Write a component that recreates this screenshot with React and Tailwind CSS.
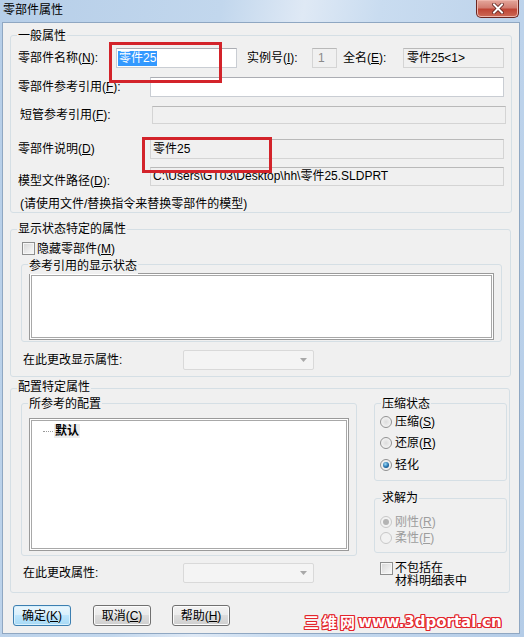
import React from 'react';

const U = ({ c }) => <span className="underline">{c}</span>;

const field = 'h-[20px] flex items-center border border-[#c9cdd3] border-t-[#abadb3]';
const ro = 'bg-[#f0f0f0] border border-[#d4d4d4] border-t-[#b9b9b9]';
const listbox =
  'bg-white border border-[#9a9a9a] shadow-[inset_0_0_0_1px_#fff,inset_0_0_0_2px_#a8a8a8]';

function Group({ label, className = '', top = '-top-[8px]', children }) {
  return (
    <div className={`relative border border-[#d5dfe5] rounded-[3px] ${className}`}>
      <span className={`absolute ${top} left-[6px] px-[1px] bg-[#f0f0f0] leading-[16px] whitespace-nowrap`}>
        {label}
      </span>
      {children}
    </div>
  );
}

const Checkbox = () => (
  <span className="w-[13px] h-[13px] shrink-0 border border-[#8e8f8f] bg-[linear-gradient(135deg,#d6d6d6,#fbfbfb)] shadow-[inset_0_0_0_1px_#f6f6f6]" />
);

const Radio = ({ checked, disabled }) => (
  <span
    className={`w-[12px] h-[12px] shrink-0 rounded-full border flex items-center justify-center ${
      disabled
        ? 'border-[#c8c8c8] bg-[#f2f2f2]'
        : 'border-[#929292] bg-[radial-gradient(circle,#dcdcdc_0%,#f6f6f6_80%)]'
    }`}
  >
    {checked && (
      <span
        className={`w-[6px] h-[6px] rounded-full ${
          disabled
            ? 'bg-[#b4b4b4]'
            : 'bg-[radial-gradient(circle_at_40%_35%,#9edcf8,#2370ac_55%,#0c3a66)]'
        }`}
      />
    )}
  </span>
);

const Combo = () => (
  <div className="w-[131px] h-[20px] rounded-[2px] border border-[#d9d9d9] bg-[#f4f4f4] flex items-center justify-end pr-[6px]">
    <svg width="7" height="4" viewBox="0 0 7 4">
      <path d="M0 0h7L3.5 4z" fill="#a8a8a8" />
    </svg>
  </div>
);

const Button = ({ children, primary }) => (
  <button
    className={`w-[58px] h-[21px] rounded-[3px] border text-[12px] leading-[16px] ${
      primary
        ? 'border-[#3c7fb1] bg-[linear-gradient(#eaf6fd_0%,#d9f0fc_50%,#bee6fd_50%,#a7d9f5_100%)] shadow-[inset_0_0_0_1px_#d8f0fc]'
        : 'border-[#707070] bg-[linear-gradient(#f2f2f2_0%,#ebebeb_50%,#dddddd_50%,#cfcfcf_100%)] shadow-[inset_0_0_0_1px_#fcfcfc]'
    }`}
  >
    {children}
  </button>
);

export default function App() {
  return (
    <div className="relative w-[524px] h-[637px] overflow-hidden bg-[linear-gradient(100deg,#b6cee8_0%,#c2d7ed_35%,#dfe9f5_48%,#c9dcf0_60%,#b4cce7_100%)] text-[12px] leading-[16px] text-black font-['Liberation_Sans','Noto_Sans_CJK_SC',sans-serif]">
      {/* title bar */}
      <div className="h-[23px] flex items-start justify-between pl-[3px] pr-[5px]">
        <span className="pt-[2px]">零部件属性</span>
        <div className="w-[43px] h-[18px] rounded-b-[5px] border border-t-0 border-[#6b2620] bg-[linear-gradient(#e4a79c_0%,#d27d71_45%,#bf4535_55%,#cc6a57_100%)] shadow-[inset_0_0_0_1px_#eeb6ac] flex items-center justify-center">
          <svg width="12" height="11" viewBox="0 0 12 11">
            <path d="M2 1.5l8 8M10 1.5l-8 8" stroke="#5a1d18" strokeWidth="3.6" strokeLinecap="square" />
            <path d="M2 1.5l8 8M10 1.5l-8 8" stroke="#fff" strokeWidth="2" strokeLinecap="square" />
          </svg>
        </div>
      </div>

      {/* client area */}
      <div className="ml-[3px] w-[516px] h-[610px] bg-[#f0f0f0] shadow-[0_0_0_1px_#8fa7c2] pl-[7px] pt-[12px]">
        {/* 一般属性 */}
        <Group label="一般属性" className="w-[502px] h-[178px]">
          <div className="flex items-center h-[20px] mt-[12px] pl-[7px]">
            <span className="w-[98px]">零部件名称(<U c="N" />):</span>
            <div className={`${field} w-[121px] bg-white pl-[1px]`}>
              <span className="bg-[#3399ff] text-white leading-[15px] px-[1px]">零件25</span>
            </div>
            <span className="ml-[10px] w-[65px]">实例号(<U c="I" />):</span>
            <div className={`${ro} h-[20px] w-[25px] pl-[5px] flex items-center text-[#8a8a8a]`}>1</div>
            <span className="ml-[6px] w-[60px]">全名(<U c="E" />):</span>
            <div className={`${ro} h-[20px] w-[101px] pl-[3px] flex items-center`}>零件25&lt;1&gt;</div>
          </div>

          <div className="flex items-center h-[20px] mt-[9px] pl-[7px]">
            <span className="w-[132px]">零部件参考引用(<U c="F" />):</span>
            <div className={`${field} w-[354px] bg-white`} />
          </div>

          <div className="flex items-center h-[18px] mt-[9px] pl-[9px]">
            <span className="w-[132px]">短管参考引用(<U c="F" />):</span>
            <div className={`${ro} h-[18px] w-[354px]`} />
          </div>

          <div className="flex items-center h-[20px] mt-[15px] pl-[7px]">
            <span className="w-[132px]">零部件说明(<U c="D" />)</span>
            <div className={`${ro} h-[20px] w-[354px] pl-[2px] flex items-start pt-[1px]`}>零件25</div>
          </div>

          <div className="flex items-start mt-[8px] pl-[7px]">
            <span className="w-[132px] pt-[6px]">模型文件路径(<U c="D" />):</span>
            <div className={`${ro} h-[19px] w-[354px] pl-[2px] flex items-start`}>
              C:\Users\GT03\Desktop\hh\零件25.SLDPRT
            </div>
          </div>

          <div className="mt-[7px] pl-[9px]">(请使用文件/替换指令来替换零部件的模型)</div>
        </Group>

        {/* 显示状态特定的属性 */}
        <Group label="显示状态特定的属性" top="-top-[9px]" className="w-[501px] h-[148px] mt-[16px]">
          <div className="flex items-center h-[13px] mt-[12px] pl-[11px]">
            <Checkbox />
            <span className="ml-[2px]">隐藏零部件(<U c="M" />)</span>
          </div>
          <Group label="参考引用的显示状态" top="-top-[7px]" className="ml-[10px] mt-[9px] w-[481px] h-[78px]">
            <div className={`${listbox} ml-[7px] mt-[8px] w-[465px] h-[67px]`} />
          </Group>
          <div className="flex items-center h-[20px] mt-[8px] pl-[12px]">
            <span className="w-[160px]">在此更改显示属性:</span>
            <Combo />
          </div>
        </Group>

        {/* 配置特定属性 */}
        <Group label="配置特定属性" top="-top-[10px]" className="w-[500px] h-[205px] mt-[11px]">
          <div className="flex">
            <div className="w-[346px]">
              <Group label="所参考的配置" className="ml-[10px] mt-[14px] w-[336px] h-[153px]">
                <div className={`${listbox} ml-[7px] mt-[14px] w-[320px] h-[133px] pt-[5px] pl-[13px]`}>
                  <div className="flex items-center h-[14px]">
                    <span className="w-[10px] border-t border-dotted border-[#9a9a9a]" />
                    <span className="ml-[1px] px-[1px] bg-[#ececec] font-bold leading-[14px]">默认</span>
                  </div>
                </div>
              </Group>
              <div className="flex items-center h-[20px] mt-[7px] pl-[12px]">
                <span className="w-[160px]">在此更改属性:</span>
                <Combo />
              </div>
            </div>

            <div className="ml-[17px] w-[133px]">
              <Group label="压缩状态" className="mt-[14px] h-[78px]">
                <div className="flex items-center h-[14px] mt-[11px] pl-[5px]">
                  <Radio />
                  <span className="ml-[3px]">压缩(<U c="S" />)</span>
                </div>
                <div className="flex items-center h-[14px] mt-[7px] pl-[5px]">
                  <Radio />
                  <span className="ml-[3px]">还原(<U c="R" />)</span>
                </div>
                <div className="flex items-center h-[14px] mt-[8px] pl-[5px]">
                  <Radio checked />
                  <span className="ml-[3px]">轻化</span>
                </div>
              </Group>

              <Group label="求解为" top="-top-[9px]" className="mt-[17px] h-[55px]">
                <div className="flex items-center h-[14px] mt-[16px] pl-[5px] text-[#9d9d9d]">
                  <Radio checked disabled />
                  <span className="ml-[3px]">刚性(<U c="R" />)</span>
                </div>
                <div className="flex items-center h-[14px] mt-[2px] pl-[5px] text-[#9d9d9d]">
                  <Radio disabled />
                  <span className="ml-[3px]">柔性(<U c="F" />)</span>
                </div>
              </Group>

              <div className="flex items-start mt-[9px] pl-[6px]">
                <Checkbox />
                <span className="ml-[2px] leading-[13px]">
                  不包括在
                  <br />
                  材料明细表中
                </span>
              </div>
            </div>
          </div>
        </Group>

        {/* buttons */}
        <div className="flex mt-[12px] ml-[3px]">
          <Button primary>
            确定(<U c="K" />)
          </Button>
          <div className="ml-[22px]">
            <Button>
              取消(<U c="C" />)
            </Button>
          </div>
          <div className="ml-[21px]">
            <Button>
              帮助(<U c="H" />)
            </Button>
          </div>
        </div>
      </div>

      {/* annotation boxes */}
      <div className="absolute left-[109px] top-[42px] w-[113px] h-[41px] border-[3px] border-[#d3232a]" />
      <div className="absolute left-[142px] top-[137px] w-[130px] h-[36px] border-[3px] border-[#d3232a]" />

      {/* watermark */}
      <div className="absolute left-[304px] top-[614px] flex items-end leading-[16px] font-bold text-white [text-shadow:1px_0_#e3242b,-1px_0_#e3242b,0_1px_#e3242b,0_-1px_#e3242b,1px_1px_#e3242b,-1px_-1px_#e3242b,1px_-1px_#e3242b,-1px_1px_#e3242b]">
        <span className="text-[15px] tracking-[3px] font-['Noto_Sans_CJK_SC',sans-serif]">三维网</span>
        <span className="text-[15px] font-['DejaVu_Sans',sans-serif]">www.3dportal.cn</span>
      </div>
    </div>
  );
}
